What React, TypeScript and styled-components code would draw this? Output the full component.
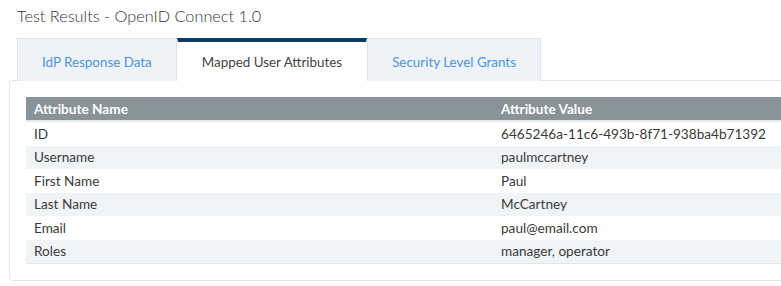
import React, { useState } from 'react'
import styled, { createGlobalStyle } from 'styled-components'

const GlobalStyle = createGlobalStyle`
  html, body {
    margin: 0;
    padding: 0;
    background: #ffffff;
    overflow: hidden;
  }

  body {
    font-family: Lato, "Noto Sans", sans-serif;
    color: #333;
  }
`

const attributes = [
  { name: 'ID', value: '6465246a-11c6-493b-8f71-938ba4b71392' },
  { name: 'Username', value: 'paulmccartney' },
  { name: 'First Name', value: 'Paul' },
  { name: 'Last Name', value: 'McCartney' },
  { name: 'Email', value: 'paul@email.com' },
  { name: 'Roles', value: 'manager, operator' }
]

const tabs = ['IdP Response Data', 'Mapped User Attributes', 'Security Level Grants']

export default function App () {
  const [active, setActive] = useState(1)

  return <Page>
    <GlobalStyle />
    <Title>Test Results - OpenID Connect 1.0</Title>

    <TabBar>
      {tabs.map((label, i) => (
        <Tab key={label} $active={i === active} onClick={() => setActive(i)}>
          {label}
        </Tab>
      ))}
    </TabBar>

    <Panel>
      <Table>
        <thead>
          <tr>
            <HeadCell>Attribute Name</HeadCell>
            <HeadCell>Attribute Value</HeadCell>
          </tr>
        </thead>
        <tbody>
          {attributes.map((attr, i) => (
            <Row key={attr.name} $striped={i % 2 === 1}>
              <Cell>{attr.name}</Cell>
              <Cell>{attr.value}</Cell>
            </Row>
          ))}
        </tbody>
      </Table>
    </Panel>
  </Page>
}

const Page = styled.div`
  width: 968px;
  padding: 6px 0 0 9px;
`

const Title = styled.h2`
  margin: 0 0 0 8px;
  height: 32px;

  font-size: 16.3px;
  font-weight: 300;
  line-height: 20px;

  color: #333;
`

const TabBar = styled.div`
  margin-left: 8px;

  display: flex;
  align-items: flex-end;

  position: relative;
  z-index: 1;
  margin-bottom: -1px;
`

const Tab = styled.div<{ $active: boolean }>`
  height: 43px;
  padding: 0 24px;
  box-sizing: border-box;

  display: flex;
  align-items: center;

  font-size: 13.4px;

  cursor: pointer;

  color: ${p => p.$active ? '#444' : '#4a94e0'};
  background-color: ${p => p.$active ? '#ffffff' : '#eff3f7'};

  border: 1px solid ${p => p.$active ? '#ffffff' : '#dfe4ea'};
  border-top: ${p => p.$active ? '4px solid #0b3960' : '1px solid #dfe4ea'};
  border-bottom: none;
  padding-top: ${p => p.$active ? '0' : '3px'};
`

const Panel = styled.div`
  padding: 16px;

  border: 1px solid #dfe4ea;
  border-radius: 4px;
`

const Table = styled.table`
  width: 100%;

  border-collapse: collapse;
  table-layout: fixed;

  font-size: 13.6px;

  border-bottom: 1px solid #dfe4ea;
`

const HeadCell = styled.th`
  height: 23px;
  padding: 0 8px;

  text-align: left;
  font-weight: 700;

  color: #ffffff;
  background-color: #89939a;

  border-bottom: 2px solid #e6eaee;
`

const Row = styled.tr<{ $striped: boolean }>`
  background-color: ${p => p.$striped ? '#f1f4f7' : '#ffffff'};
`

const Cell = styled.td`
  height: 23.5px;
  padding: 0 8px;

  color: #3a3a3a;
`
